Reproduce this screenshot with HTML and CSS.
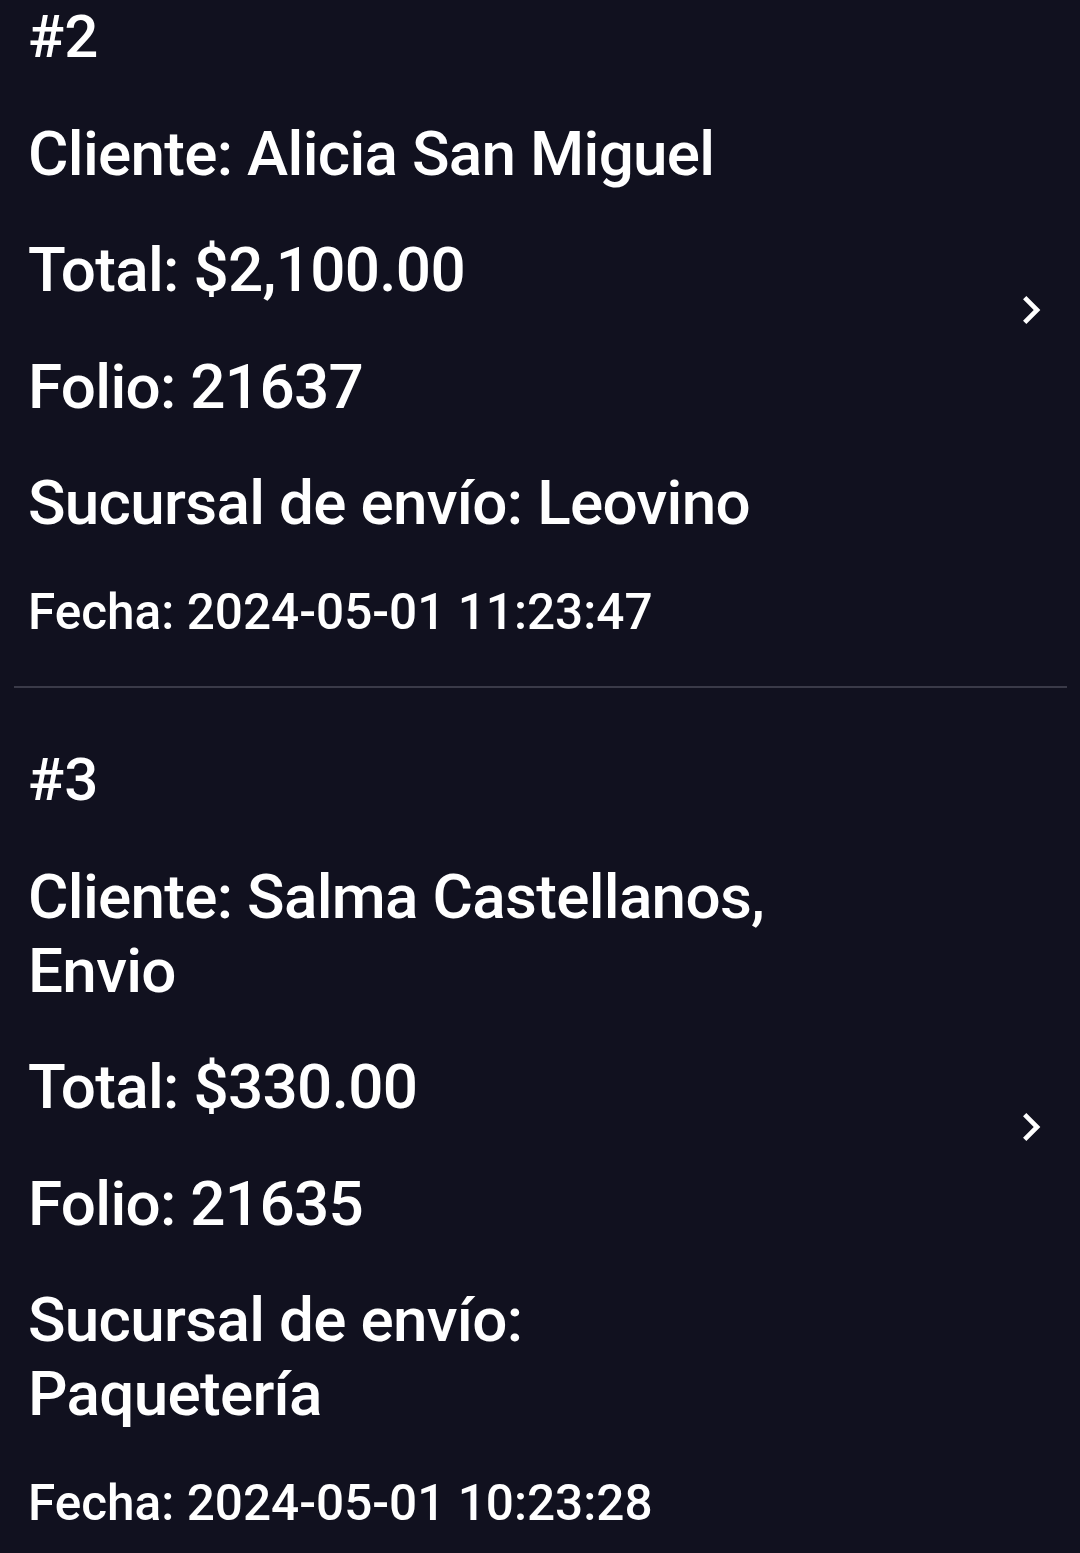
FILE: index.html
```html
<!DOCTYPE html>
<html lang="es">
<head>
    <meta charset="UTF-8">
    <meta name="viewport" content="width=device-width, initial-scale=1.0">
    <title>Pedidos</title>
    <link rel="stylesheet" href="styles.css">
</head>
<body>

    <main class="pedidos">
        <div class="pedido">
            <div class="pedido-info">
                <p class="pedido-num">#2</p>
                <p class="linea">Cliente: Alicia San Miguel</p>
                <p class="linea">Total: $2,100.00</p>
                <p class="linea">Folio: 21637</p>
                <p class="linea">Sucursal de envío: Leovino</p>
                <p class="fecha">Fecha: 2024-05-01 11:23:47</p>
            </div>
            <svg class="chevron" viewBox="0 0 24 24" aria-hidden="true">
                <path d="M10 6L8.59 7.41 13.17 12l-4.58 4.59L10 18l6-6z"/>
            </svg>
        </div>

        <div class="separador"></div>

        <div class="pedido">
            <div class="pedido-info">
                <p class="pedido-num">#3</p>
                <p class="linea">Cliente: Salma Castellanos, Envio</p>
                <p class="linea">Total: $330.00</p>
                <p class="linea">Folio: 21635</p>
                <p class="linea">Sucursal de envío: Paquetería</p>
                <p class="fecha">Fecha: 2024-05-01 10:23:28</p>
            </div>
            <svg class="chevron" viewBox="0 0 24 24" aria-hidden="true">
                <path d="M10 6L8.59 7.41 13.17 12l-4.58 4.59L10 18l6-6z"/>
            </svg>
        </div>
    </main>

</body>
</html>
```

FILE: styles.css
```css
* {
    margin: 0;
    padding: 0;
    box-sizing: border-box;
}

body {
    font-family: Roboto, "Noto Sans", sans-serif;
    font-weight: 500;
    background-color: #11111f;
    color: #ffffff;
}

.pedido {
    display: flex;
    align-items: center;
    padding: 55px 21px 45px 28px;
}

.pedido:first-child {
    padding-top: 0;
}

.pedido-info {
    width: 770px;
}

.pedido-num {
    font-size: 60px;
    line-height: 74px;
}

.linea {
    font-size: 62px;
    line-height: 74px;
    letter-spacing: -0.7px;
    margin-top: 42.5px;
}

.fecha {
    font-size: 49.5px;
    line-height: 58px;
    margin-top: 43px;
}

.chevron {
    width: 56px;
    height: 56px;
    margin-left: auto;
    margin-bottom: 22px;
    fill: #ffffff;
}

.separador {
    height: 2px;
    margin: 0 13px 0 14px;
    background-color: #3a3a48;
}
```
